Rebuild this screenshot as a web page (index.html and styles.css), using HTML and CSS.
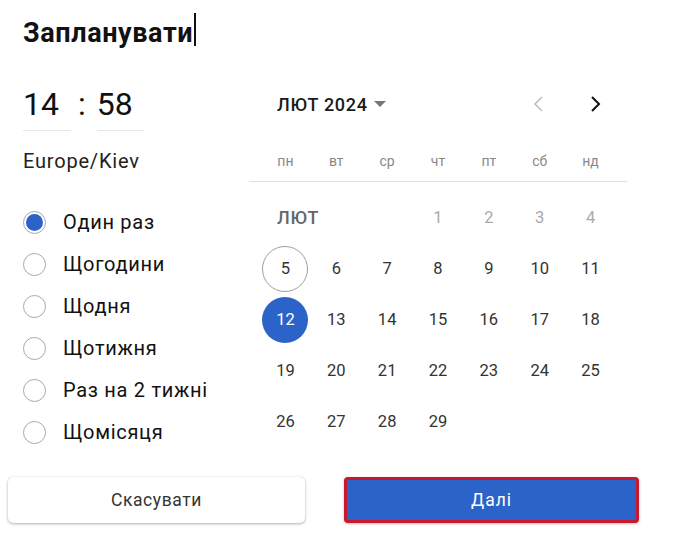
FILE: index.html
```html
<!DOCTYPE html>
<html lang="uk">
<head>
<meta charset="utf-8">
<link rel="stylesheet" href="styles.css">
</head>
<body>
<div class="dialog">
  <h1 class="title">Запланувати<span class="caret"></span></h1>
  <div class="content">
    <div class="left">
      <div class="time">
        <div class="field">14</div>
        <span class="colon">:</span>
        <div class="field">58</div>
      </div>
      <div class="tz">Europe/Kiev</div>
      <ul class="radios">
        <li class="radio checked"><span class="dot"></span>Один раз</li>
        <li class="radio"><span class="dot"></span>Щогодини</li>
        <li class="radio"><span class="dot"></span>Щодня</li>
        <li class="radio"><span class="dot"></span>Щотижня</li>
        <li class="radio"><span class="dot"></span>Раз на 2 тижні</li>
        <li class="radio"><span class="dot"></span>Щомісяця</li>
      </ul>
    </div>
    <div class="calendar">
      <div class="cal-head">
        <div class="month">ЛЮТ 2024<span class="tri"></span></div>
        <div class="nav">
          <span class="navbtn prev"><svg width="24" height="24" viewBox="0 0 24 24"><path d="M15 5l-7 7 7 7" fill="none" stroke="#bdbdbd" stroke-width="1.6"/></svg></span>
          <span class="navbtn next"><svg width="24" height="24" viewBox="0 0 24 24"><path d="M9 5l7 7-7 7" fill="none" stroke="#111" stroke-width="2"/></svg></span>
        </div>
      </div>
      <div class="weekdays">
        <span>пн</span><span>вт</span><span>ср</span><span>чт</span><span>пт</span><span>сб</span><span>нд</span>
      </div>
      <div class="days">
        <span class="mlabel">ЛЮТ</span>
        <span class="d muted">1</span><span class="d muted">2</span><span class="d muted">3</span><span class="d muted">4</span>
        <span class="d"><span class="c today">5</span></span><span class="d">6</span><span class="d">7</span><span class="d">8</span><span class="d">9</span><span class="d">10</span><span class="d">11</span>
        <span class="d"><span class="c sel">12</span></span><span class="d">13</span><span class="d">14</span><span class="d">15</span><span class="d">16</span><span class="d">17</span><span class="d">18</span>
        <span class="d">19</span><span class="d">20</span><span class="d">21</span><span class="d">22</span><span class="d">23</span><span class="d">24</span><span class="d">25</span>
        <span class="d">26</span><span class="d">27</span><span class="d">28</span><span class="d">29</span>
      </div>
    </div>
  </div>
  <div class="footer">
    <button class="btn cancel">Скасувати</button>
    <button class="btn next-btn">Далі</button>
  </div>
</div>
</body>
</html>
```
FILE: styles.css
```css
* { box-sizing: border-box; }
html, body { margin: 0; padding: 0; background: #fff; }
body { font-family: Roboto, "Noto Sans", sans-serif; color: #111; }
.dialog { width: 674px; height: 544px; }
.title {
  margin: 0;
  padding: 13px 0 0 23px;
  font-size: 27px;
  letter-spacing: 0.6px;
  line-height: 40px;
  font-weight: 700;
  color: #111;
}
.caret {
  display: inline-block;
  width: 1.5px;
  height: 33px;
  background: #111;
  vertical-align: -4px;
  margin-left: 1px;
}
.content { display: flex; align-items: flex-start; margin-top: 31px; }
.left { width: 249px; padding-left: 23px; }
.time { display: flex; align-items: flex-start; font-size: 32px; line-height: 40px; color: #111; }
.field { border-bottom: 1px solid #e6e6e6; padding-bottom: 6px; width: 48px; }
.field + .colon + .field { width: 47px; }
.colon { margin: 0 11px 0 7px; }
.tz { margin-top: 18px; font-size: 20px; letter-spacing: 0.8px; line-height: 24px; color: #222; }
.radios { list-style: none; margin: 28px 0 0; padding: 0; }
.radio { display: flex; align-items: center; height: 42px; font-size: 20px; letter-spacing: 0.7px; color: #111; }
.dot {
  width: 23px; height: 23px; border-radius: 50%;
  border: 1px solid #a8a8a8; margin-right: 17px; flex: none;
  display: flex; align-items: center; justify-content: center;
}
.checked .dot::after {
  content: ""; width: 17px; height: 17px; border-radius: 50%; background: #2c63c8;
}
.calendar { width: 378px; }
.cal-head { display: flex; align-items: center; justify-content: space-between; height: 40px; padding: 0 12px 0 28px; }
.month { font-size: 18px; letter-spacing: 0.7px; font-weight: 500; color: #1a1a1a; display: flex; align-items: center; }
.tri { width: 0; height: 0; border-left: 6.5px solid transparent; border-right: 6.5px solid transparent; border-top: 6px solid #777; margin-left: 6px; }
.nav { display: flex; gap: 16px; }
.navbtn { width: 40px; height: 40px; display: flex; align-items: center; justify-content: center; }
.weekdays {
  margin-top: 17px; height: 41px; padding: 0 11px;
  display: grid; grid-template-columns: repeat(7, 1fr); align-items: center; justify-items: center;
  border-bottom: 1px solid #e0e0e0; font-size: 14px; color: #888;
}
.days {
  padding: 10px 11px 0; display: grid; grid-template-columns: repeat(7, 1fr);
  grid-auto-rows: 51px; align-items: center; justify-items: center;
  font-size: 16.5px; color: #333;
}
.mlabel { grid-column: span 3; justify-self: start; padding-left: 17px; font-weight: 500; color: #666; font-size: 18px; letter-spacing: 0.7px; }
.muted { color: #aaa; }
.c { width: 46px; height: 46px; border-radius: 50%; display: flex; align-items: center; justify-content: center; }
.today { border: 1px solid #9e9e9e; }
.sel { background: #2c63c8; color: #fff; }
.footer { display: flex; margin-top: 24px; padding-left: 8px; }
.btn { height: 46px; font-family: Roboto, sans-serif; font-size: 17.5px; letter-spacing: 0.6px; border-radius: 5px; cursor: pointer; }
.cancel { width: 297px; background: #fff; border: none; color: #333; box-shadow: 0 1px 3px rgba(0,0,0,0.3), 0 0 1px rgba(0,0,0,0.15); }
.next-btn { width: 295px; margin-left: 39px; background: #2c63c8; color: #fff; border: 3px solid #c8172f; border-radius: 4px; box-shadow: 0 1px 3px rgba(0,0,0,0.25); letter-spacing: 1px; }
```
